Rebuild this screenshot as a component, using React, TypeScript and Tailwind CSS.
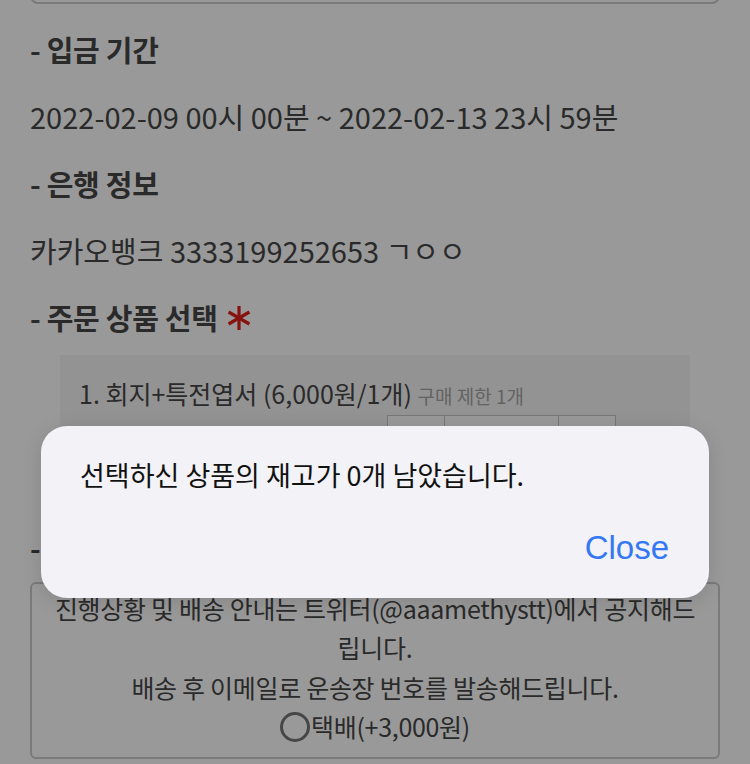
const KR = "font-['Noto_Sans_CJK_KR','Noto_Sans',sans-serif]";

function Star() {
  return (
    <svg className="ml-[9px]" width="24" height="26" viewBox="0 0 24 26" fill="none" stroke="#e0201a" strokeWidth="3.2" strokeLinecap="butt">
      <line x1="12" y1="1" x2="12" y2="25" />
      <line x1="1.6" y1="7" x2="22.4" y2="19" />
      <line x1="1.6" y1="19" x2="22.4" y2="7" />
    </svg>
  );
}

function Heading({ children, required }: { children: React.ReactNode; required?: boolean }) {
  return (
    <h3 className="flex h-[67px] items-center text-[29px] font-bold tracking-[-0.3px] text-[#474747]">
      {children}
      {required && <Star />}
    </h3>
  );
}

function Line({ children }: { children: React.ReactNode }) {
  return <p className="flex h-[67px] items-center text-[29px] text-[#474747]">{children}</p>;
}

export default function App() {
  return (
    <div className={`relative h-[764px] w-[750px] overflow-hidden bg-white ${KR}`}>
      <div className="px-[30px]">
        <div className="-mt-[40px] h-[44px] rounded-[8px] border-2 border-[#cbcbcb]" />
        <div className="pt-[12px]">
          <Heading>- 입금 기간</Heading>
          <Line>2022-02-09 00시 00분 ~ 2022-02-13 23시 59분</Line>
          <Heading>- 은행 정보</Heading>
          <Line>카카오뱅크 3333199252653 ㄱㅇㅇ</Line>
          <Heading required>- 주문 상품 선택</Heading>
        </div>

        <div className="mx-[30px] mt-[4px] bg-[#f5f5f5] px-[19px] pb-[20px] pt-[20px]">
          <p className="text-[25px] text-[#474747]">
            1. 회지+특전엽서 (6,000원/1개){" "}
            <span className="text-[19px] text-[#a5a5a5]">구매 제한 1개</span>
          </p>
          <div className="ml-[308px] mt-[2px] flex h-[44px] w-[229px] border border-[#c6c6c6] bg-white">
            <div className="w-[57px] border-r border-[#c6c6c6]" />
            <div className="w-[114px] border-r border-[#c6c6c6]" />
            <div className="flex-1" />
          </div>
        </div>

        <div className="pt-[36px]">
          <Heading required>- 배송 방법</Heading>
        </div>

        <div className="rounded-[6px] border-2 border-[#cbcbcb] px-[14px] pb-[6px] pt-[5px] text-center text-[25px] leading-[39.5px] tracking-[-0.3px] text-[#474747]">
          <p>진행상황 및 배송 안내는 트위터(@aaamethystt)에서 공지해드립니다.</p>
          <p>배송 후 이메일로 운송장 번호를 발송해드립니다.</p>
          <label className="inline-flex items-center">
            <span className="mr-[1px] inline-block h-[30px] w-[30px] rounded-full border-[3px] border-[#767676] bg-white" />
            택배(+3,000원)
          </label>
        </div>
      </div>

      <div className="absolute inset-0 bg-black/40" />

      <div className="absolute left-[41px] top-[426px] flex h-[172px] w-[668px] flex-col rounded-[26px] bg-[#f2f2f7] shadow-[0_4px_20px_rgba(0,0,0,0.12)]">
        <p className="pl-[39px] pt-[29px] text-[27px] text-[#111111]">선택하신 상품의 재고가 0개 남았습니다.</p>
        <div className="mt-auto flex justify-end pb-[26px] pr-[40px]">
          <button className="font-['Liberation_Sans',Roboto,sans-serif] text-[33px] text-[#3478f6]">Close</button>
        </div>
      </div>
    </div>
  );
}
